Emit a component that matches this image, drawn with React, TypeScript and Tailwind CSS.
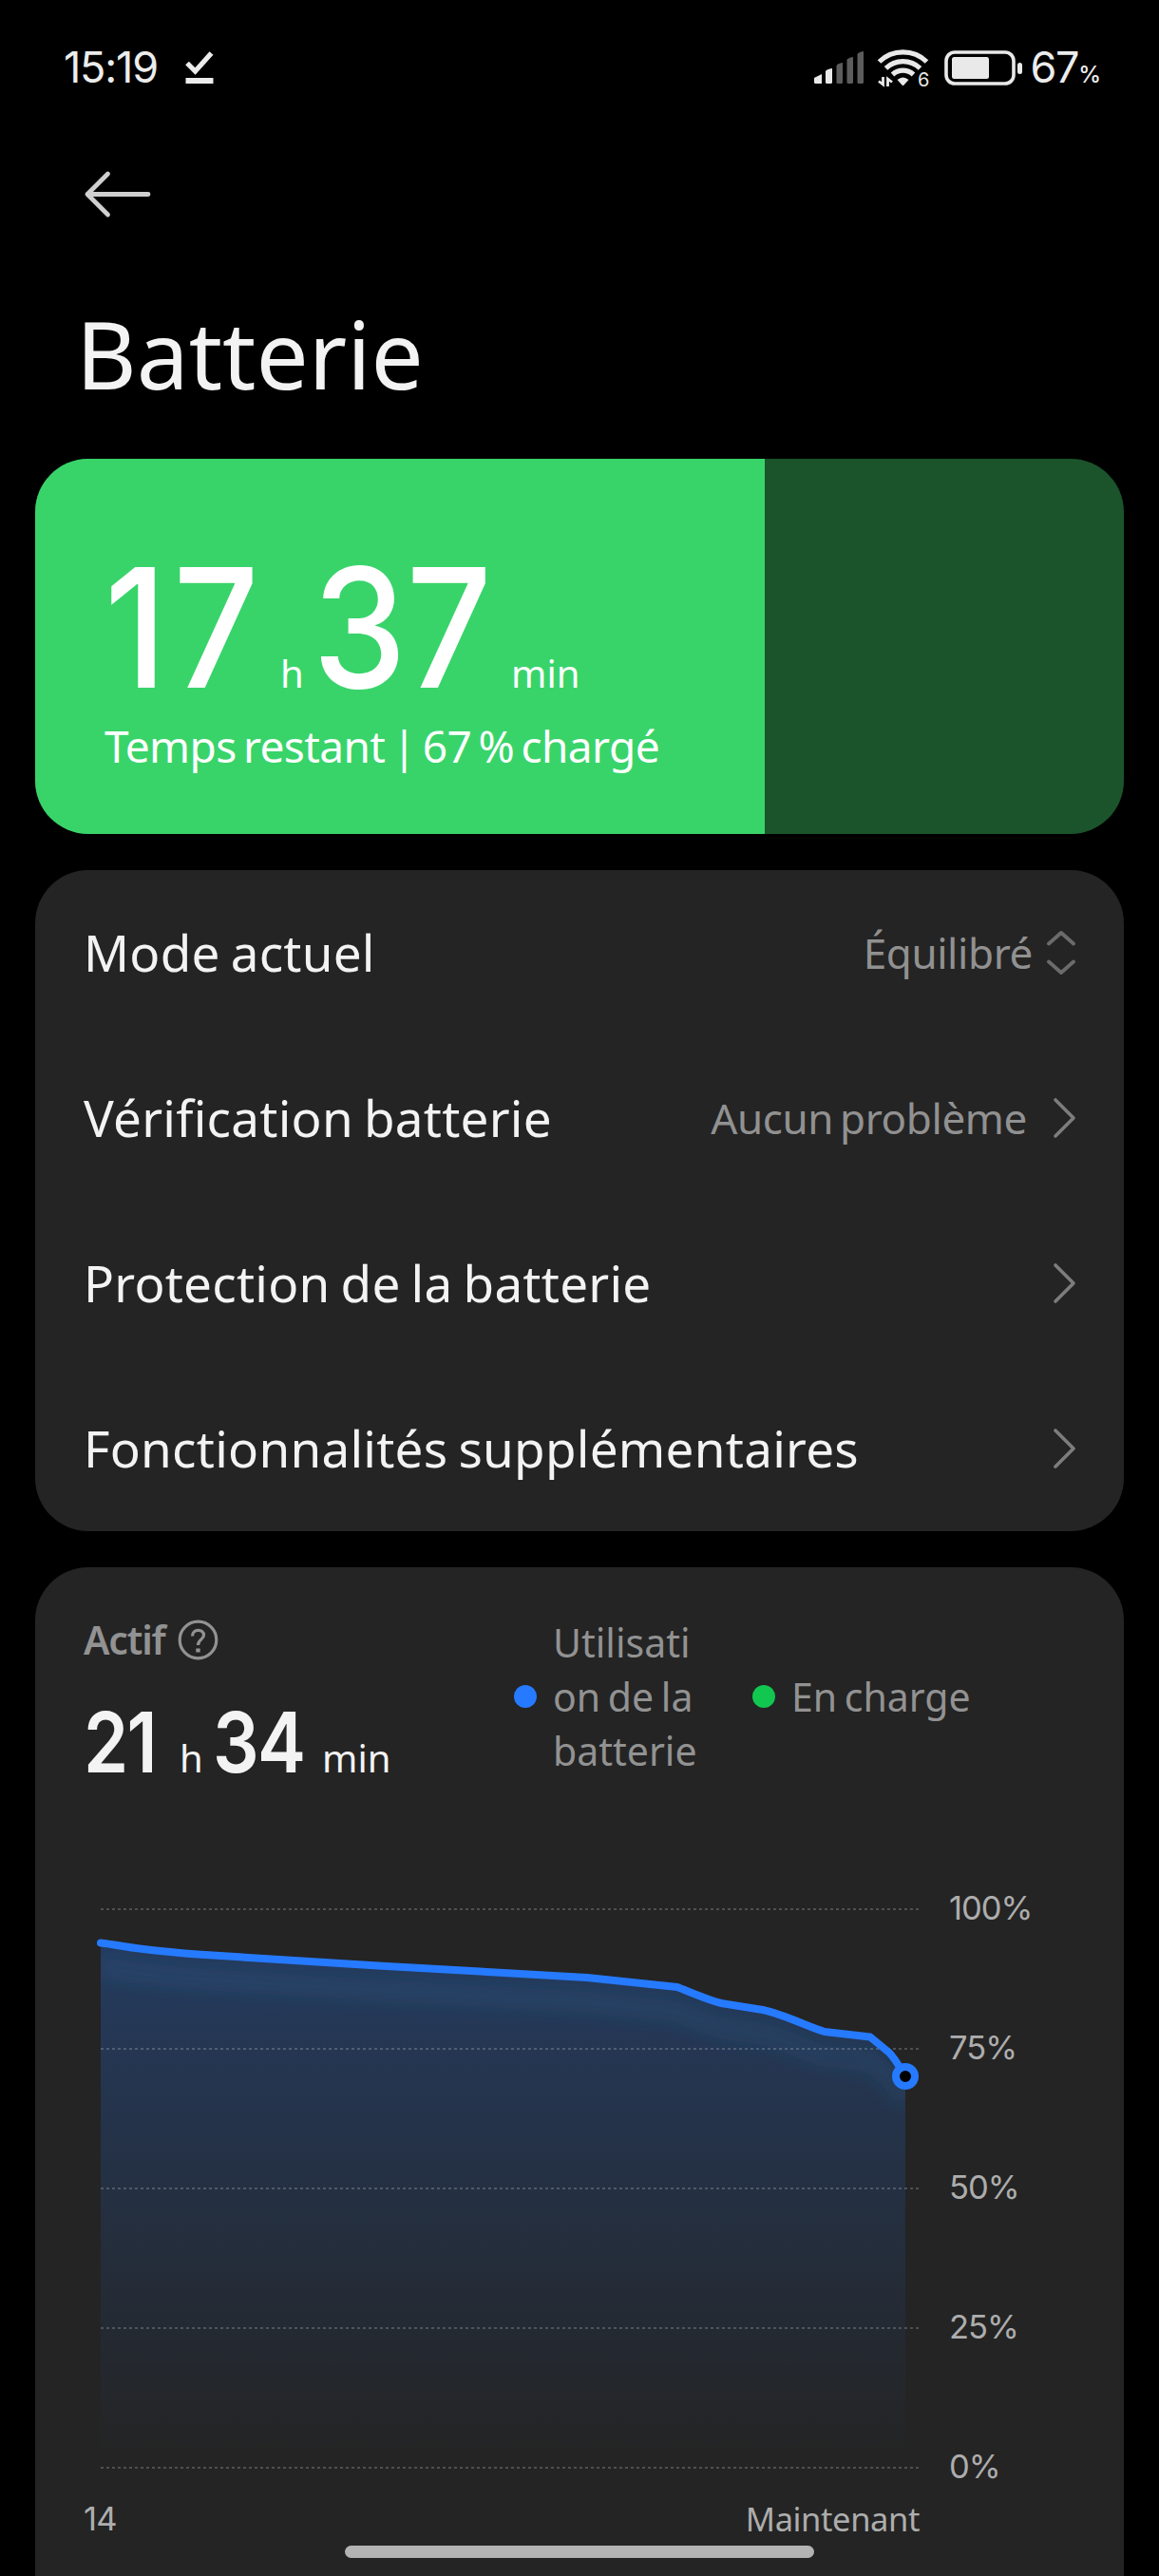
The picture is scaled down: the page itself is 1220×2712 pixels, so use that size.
import type { ReactNode } from 'react';

interface SettingRow {
  label: string;
  value?: string;
  kind: 'select' | 'link';
}

const ROWS: SettingRow[] = [
  { label: 'Mode actuel', value: 'Équilibré', kind: 'select' },
  { label: 'Vérification batterie', value: 'Aucun problème', kind: 'link' },
  { label: 'Protection de la batterie', kind: 'link' },
  { label: 'Fonctionnalités supplémentaires', kind: 'link' },
];

const LEVELS = ['100%', '75%', '50%', '25%', '0%'];
const GRID_Y = [73, 220, 367, 514, 661];

const CURVE =
  'M0 108.5 C14 110 27 113 41 114.5 C62 117 81 119 102 120.5 L292 132.5 L512 145 L607 155 C620 160 645 171 656 172.5 L697 179 C720 184 745 197 762 202 L810 207.5 L830 224 C836 230 842 241 847 249';

function SignalIcon() {
  return (
    <svg width="54" height="36" viewBox="0 0 54 36">
      <path d="M1 29 L9 25 V35 H2.5 Q1 35 1 33.500Z" fill="#e9e9e9" />
      <path d="M13 22 Q14 20 20 19 V33.500 Q20 35 18.500 35 H14.500 Q13 35 13 33.500Z" fill="#e9e9e9" />
      <path d="M24.500 16 Q25.500 14 31 13 V33.500 Q31 35 29.500 35 H26 Q24.500 35 24.500 33.500Z" fill="#5c5c5c" />
      <path d="M35.500 10 Q36.500 8 42 7 V33.500 Q42 35 40.500 35 H37 Q35.500 35 35.500 33.500Z" fill="#5c5c5c" />
      <path d="M46.500 4 Q47.500 2 53 1 V33.500 Q53 35 51.500 35 H48 Q46.500 35 46.500 33.500Z" fill="#5c5c5c" />
    </svg>
  );
}

function WifiIcon() {
  return (
    <svg className="overflow-visible" width="56" height="42" viewBox="0 0 56 42">
      <g fill="none" stroke="#e9e9e9" strokeWidth="5.2">
        <path d="M2.500 15 A36 36 0 0 1 52.500 15" />
        <path d="M9.500 21.800 A26 26 0 0 1 45.500 21.800" />
        <path d="M16.500 28.500 A16 16 0 0 1 38.500 28.500" />
      </g>
      <path d="M21.500 34 Q27.500 29 33.500 34 L28.500 39.500 Q27.500 40.500 26.500 39.500Z" fill="#e9e9e9" />
      <path d="M6.500 31 V39 L2 35.500 M11.500 41 V33 L16 36.500" fill="none" stroke="#e9e9e9" strokeWidth="2.8" />
      <text x="43" y="41" fontFamily="Inter, sans-serif" fontSize="20" fill="#e9e9e9">6</text>
    </svg>
  );
}

function BatteryIcon() {
  return (
    <svg width="83" height="37" viewBox="0 0 83 37">
      <rect x="2" y="2" width="71" height="33" rx="9" fill="none" stroke="#e9e9e9" strokeWidth="3.600" />
      <rect x="8" y="7" width="39" height="23" rx="2.500" fill="#e9e9e9" />
      <rect x="77" y="13" width="5" height="12" rx="2.500" fill="#e9e9e9" />
    </svg>
  );
}

function StatusBar() {
  return (
    <div className="flex h-[142px] items-center justify-between pl-[67px] pr-[61px] text-[#ececec]">
      <div className="flex items-center">
        <span className="w-[128px] text-[45px] leading-[60px] tracking-[-1.2px]">15:19</span>
        <svg width="30" height="36" viewBox="0 0 30 36">
          <path d="M2 13.500 L10.500 22 L27.500 3" fill="none" stroke="#ececec" strokeWidth="5.200" />
          <rect x="0.500" y="29" width="29" height="6" fill="#ececec" />
        </svg>
      </div>
      <div className="flex items-center">
        <SignalIcon />
        <div className="ml-[13px]"><WifiIcon /></div>
        <div className="ml-[15px]"><BatteryIcon /></div>
        <div className="ml-[8px] flex items-baseline">
          <span className="text-[45px] leading-[60px] tracking-[-1.4px]">67</span>
          <span className="text-[24px] font-medium leading-[40px]">%</span>
        </div>
      </div>
    </div>
  );
}

function Card({ className, children }: { className: string; children: ReactNode }) {
  return <section className={`mx-[37px] overflow-hidden bg-[#242424] ${className}`}>{children}</section>;
}

function RowIcon({ kind }: { kind: SettingRow['kind'] }) {
  if (kind === 'select') {
    return (
      <svg className="ml-[14px]" width="32" height="50" viewBox="0 0 32 50">
        <path d="M3 15.500 L16 4 L29 15.500 M3 34.500 L16 46 L29 34.500" fill="none" stroke="#6b6b6b" strokeWidth="3.800" strokeLinecap="round" strokeLinejoin="round" />
      </svg>
    );
  }
  return (
    <svg className="ml-[27px]" width="25" height="44" viewBox="0 0 25 44">
      <path d="M3 3 L22 22 L3 41" fill="none" stroke="#7d7d7d" strokeWidth="3.600" strokeLinecap="round" strokeLinejoin="round" />
    </svg>
  );
}

function Legend({ color, children }: { color: string; children: ReactNode }) {
  return (
    <div className="flex items-center">
      <span className={`mr-[17px] size-[24px] rounded-full ${color}`} />
      <span className="pt-[2px] font-['Noto_Sans',sans-serif] text-[41px] leading-[57px] text-[#929292] [word-spacing:-3px]">{children}</span>
    </div>
  );
}

function BatteryChart() {
  return (
    <svg className="shrink-0 overflow-visible" width="862" height="685" viewBox="0 0 862 685">
      <defs>
        <linearGradient id="fill" x1="0" y1="108" x2="0" y2="650" gradientUnits="userSpaceOnUse">
          <stop offset="0" stopColor="#267aff" stopOpacity="0.27" />
          <stop offset="0.25" stopColor="#267aff" stopOpacity="0.2" />
          <stop offset="1" stopColor="#267aff" stopOpacity="0" />
        </linearGradient>
        <filter id="soft" x="-10%" y="-50%" width="120%" height="200%">
          <feGaussianBlur stdDeviation="9" />
        </filter>
        <clipPath id="area">
          <path d={`${CURVE} V661 H0Z`} />
        </clipPath>
      </defs>
      <path d={`${CURVE} V661 H0Z`} fill="url(#fill)" />
      <g clipPath="url(#area)">
        <path d={CURVE} transform="translate(0 26)" fill="none" stroke="#2b6a94" strokeOpacity="0.2" strokeWidth="22" filter="url(#soft)" />
      </g>
      {GRID_Y.map(y => (
        <path key={y} d={`M0 ${y} H862`} stroke="#ffffff" strokeOpacity="0.2" strokeWidth="2" strokeDasharray="3 3" />
      ))}
      <path d={CURVE} fill="none" stroke="#267aff" strokeWidth="8" strokeLinecap="round" strokeLinejoin="round" />
      <circle cx="847" cy="249" r="10" fill="#000000" stroke="#267aff" strokeWidth="8" />
    </svg>
  );
}

export default function App() {
  return (
    <div className="relative h-[2712px] w-[1220px] overflow-hidden bg-black font-[Inter,sans-serif] text-[#f3f3f3]">
      <StatusBar />

      <header className="font-['Noto_Sans',sans-serif]">
        <svg className="ml-[88px] mt-[37px]" width="72" height="52" viewBox="0 0 72 52">
          <path d="M25.500 4 L4 25.500 L25.500 47 M4 25.500 H68" fill="none" stroke="#cfcfcf" strokeWidth="4.800" strokeLinecap="round" strokeLinejoin="round" />
        </svg>
        <h1 className="ml-[80px] mt-[81px] text-[98px] leading-[120px]">Batterie</h1>
      </header>

      <section className="mx-[37px] mt-[51px] flex h-[395px] overflow-hidden rounded-[56px] bg-[#1b542b] text-white">
        <div className="w-[768px] bg-[#38d46a] pl-[73px] pt-[89px]">
          <div className="flex items-baseline whitespace-nowrap font-medium">
            <span className="w-[185px] origin-left scale-x-[0.9] text-[175px] leading-[176px] tracking-[8px]">17</span>
            <span className="w-[34px] font-['Noto_Sans',sans-serif] text-[40px] font-normal leading-none">h</span>
            <span className="w-[209px] origin-left scale-x-[0.9] text-[175px] leading-[176px]">37</span>
            <span className="font-['Noto_Sans',sans-serif] text-[40px] font-normal leading-none">min</span>
          </div>
          <p className="mt-[7px] whitespace-nowrap font-['Noto_Sans',sans-serif] text-[46px] leading-[60px] tracking-[-0.6px] [word-spacing:-4px]">Temps restant | 67 % chargé</p>
        </div>
      </section>

      <Card className="mt-[38px] rounded-[56px]">
        {ROWS.map(row => (
          <div key={row.label} className="flex h-[174px] items-center pl-[51px] pr-[50px] font-['Noto_Sans',sans-serif]">
            <span className="flex-1 whitespace-nowrap text-[53px] leading-[72px] tracking-[0.25px] [word-spacing:-3px]">{row.label}</span>
            {row.value && <span className="text-[44px] leading-[60px] tracking-[-0.4px] text-[#919191] [word-spacing:-4px]">{row.value}</span>}
            <RowIcon kind={row.kind} />
          </div>
        ))}
      </Card>

      <Card className="mt-[38px] h-[1100px] rounded-t-[56px] pl-[51px] pt-[50px]">
        <div className="flex h-[237px] items-start">
          <div className="w-[453px]">
            <div className="flex h-[52px] items-center font-['Noto_Sans',sans-serif] text-[#929292]">
              <span className="w-[99px] text-[41px] font-semibold leading-[50px] tracking-[-1.2px]">Actif</span>
              <svg width="43" height="43" viewBox="0 0 43 43" fill="none" stroke="#929292" strokeWidth="3.200">
                <circle cx="21.500" cy="21.500" r="19.300" />
                <path d="M15.500 17.500 C15.500 9.500 27.500 9.500 27.500 16.500 C27.500 21 21.500 21 21.500 27" />
                <path d="M21.500 30.500 V34.500" strokeWidth="4.400" />
              </svg>
            </div>
            <div className="mt-[38px] flex items-baseline whitespace-nowrap font-semibold">
              <span className="w-[101px] origin-left scale-x-[0.86] text-[88px] leading-[88px] tracking-[-2px]">21</span>
              <span className="w-[35px] font-['Noto_Sans',sans-serif] text-[40px] font-normal leading-none">h</span>
              <span className="w-[115px] origin-left scale-x-[0.87] text-[88px] leading-[88px] tracking-[-2px]">34</span>
              <span className="font-['Noto_Sans',sans-serif] text-[40px] font-normal leading-none">min</span>
            </div>
          </div>
          <div className="flex h-[171px] items-center whitespace-nowrap">
            <div className="w-[251px]">
              <Legend color="bg-[#267aff]">Utilisati<br />on de la<br />batterie</Legend>
            </div>
            <Legend color="bg-[#12c750]">En charge</Legend>
          </div>
        </div>

        <div className="flex pl-[18px]">
          <BatteryChart />
          <div className="ml-[31px] flex flex-col gap-[97px] pt-[47px] text-[34.500px] leading-[50px] tracking-[-1px] text-[#adadad]">
            {LEVELS.map(level => <span key={level}>{level}</span>)}
          </div>
        </div>
        <div className="mt-[5px] flex w-[880px] justify-between text-[34.500px] leading-[50px] text-[#adadad]">
          <span className="tracking-[-0.8px]">14</span>
          <span className="font-['Noto_Sans',sans-serif] tracking-[-0.4px]">Maintenant</span>
        </div>
      </Card>

      <div className="absolute left-[363px] top-[2680px] h-[13px] w-[494px] rounded-full bg-[#b3b3b3]" />
    </div>
  );
}
